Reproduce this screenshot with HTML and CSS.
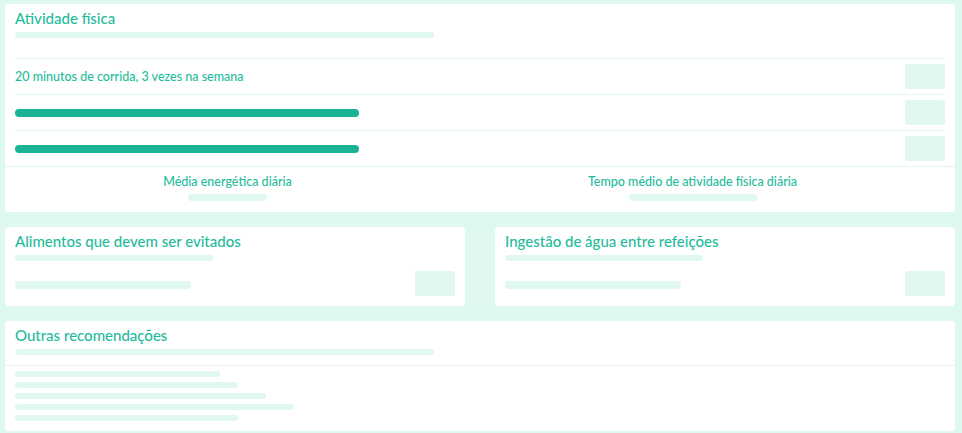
FILE: index.html
```html
<!DOCTYPE html>
<html lang="pt">
<head>
<meta charset="utf-8">
<title>Recomendações</title>
<link rel="stylesheet" href="styles.css">
</head>
<body>
<div class="page">
  <section class="card">
    <div class="card-head card-head--tall">
      <h2 class="title">Atividade física</h2>
      <div class="skel skel--head"></div>
    </div>
    <div class="rows">
      <div class="row">
        <span class="row-text">20 minutos de corrida, 3 vezes na semana</span>
        <div class="box"></div>
      </div>
      <div class="row">
        <div class="bar"></div>
        <div class="box"></div>
      </div>
      <div class="row">
        <div class="bar"></div>
        <div class="box"></div>
      </div>
    </div>
    <div class="foot">
      <div class="foot-grid">
        <div class="foot-col">
          <span class="foot-label">Média energética diária</span>
          <div class="skel skel--foot" style="width:79px"></div>
        </div>
        <div class="foot-col">
          <span class="foot-label">Tempo médio de atividade física diária</span>
          <div class="skel skel--foot" style="width:128px"></div>
        </div>
      </div>
    </div>
  </section>

  <div class="pair">
    <section class="card">
      <div class="card-head">
        <h2 class="title">Alimentos que devem ser evitados</h2>
        <div class="skel skel--head" style="width:198px"></div>
      </div>
      <div class="card-body">
        <div class="skel skel--line" style="width:176px"></div>
        <div class="box"></div>
      </div>
    </section>
    <section class="card">
      <div class="card-head">
        <h2 class="title">Ingestão de água entre refeições</h2>
        <div class="skel skel--head" style="width:198px"></div>
      </div>
      <div class="card-body">
        <div class="skel skel--line" style="width:176px"></div>
        <div class="box"></div>
      </div>
    </section>
  </div>

  <section class="card">
    <div class="card-head">
      <h2 class="title">Outras recomendações</h2>
      <div class="skel skel--head"></div>
    </div>
    <div class="list">
      <div class="skel skel--item" style="width:205px"></div>
      <div class="skel skel--item" style="width:223px"></div>
      <div class="skel skel--item" style="width:251px"></div>
      <div class="skel skel--item" style="width:279px"></div>
      <div class="skel skel--item" style="width:223px"></div>
    </div>
  </section>
</div>
</body>
</html>
```

FILE: styles.css
```css
* { box-sizing: border-box; }

html, body {
  margin: 0;
  padding: 0;
  background: #e0f9f0;
  font-family: Lato, "Noto Sans", sans-serif;
  color: #1fbc9c;
}

.page {
  padding: 4px 7px 0 5px;
  display: flex;
  flex-direction: column;
  gap: 15px;
}

.card {
  background: #ffffff;
  border-radius: 4px;
}

.card-head {
  padding: 4px 10px 10px;
}

.card-head--tall {
  padding-bottom: 20px;
}

.title {
  margin: 0;
  font-size: 15px;
  line-height: 20px;
  font-weight: 500;
  color: #1fbc9c;
}

.skel {
  background: #e0f8f0;
  border-radius: 4px;
}

.skel--head {
  margin-top: 4px;
  height: 6px;
  width: 419px;
  border-radius: 3px;
}

.rows {
  padding: 0 10px;
}

.row {
  height: 36px;
  border-top: 1px solid #e0f7f0;
  display: flex;
  align-items: center;
  justify-content: space-between;
}

.row-text {
  font-size: 12.5px;
  font-weight: 500;
}

.box {
  width: 40px;
  height: 25px;
  background: #e0f8f0;
  border-radius: 3px;
  flex: none;
}

.bar {
  width: 344px;
  height: 8px;
  border-radius: 4px;
  background: #1ab394;
}

.foot {
  border-top: 1px solid #e0f7f0;
  padding: 7px 0 11px;
}

.foot-grid {
  display: grid;
  grid-template-columns: 1fr 1fr;
  margin: 0 30px 0 -10px;
}

.foot-col {
  display: flex;
  flex-direction: column;
  align-items: center;
}

.foot-label {
  font-size: 12.5px;
  line-height: 16px;
  font-weight: 500;
}

.skel--foot {
  margin-top: 4px;
  height: 7px;
}

.pair {
  display: grid;
  grid-template-columns: 1fr 1fr;
  gap: 30px;
}

.card-body {
  padding: 0 10px 10px;
  display: flex;
  align-items: center;
  justify-content: space-between;
}

.skel--line {
  height: 8px;
  margin-top: 2px;
}

.list {
  border-top: 1px solid #e6f3ef;
  padding: 5px 10px 10px;
  display: flex;
  flex-direction: column;
  gap: 5px;
}

.skel--item {
  height: 6px;
  border-radius: 3px;
}
```
